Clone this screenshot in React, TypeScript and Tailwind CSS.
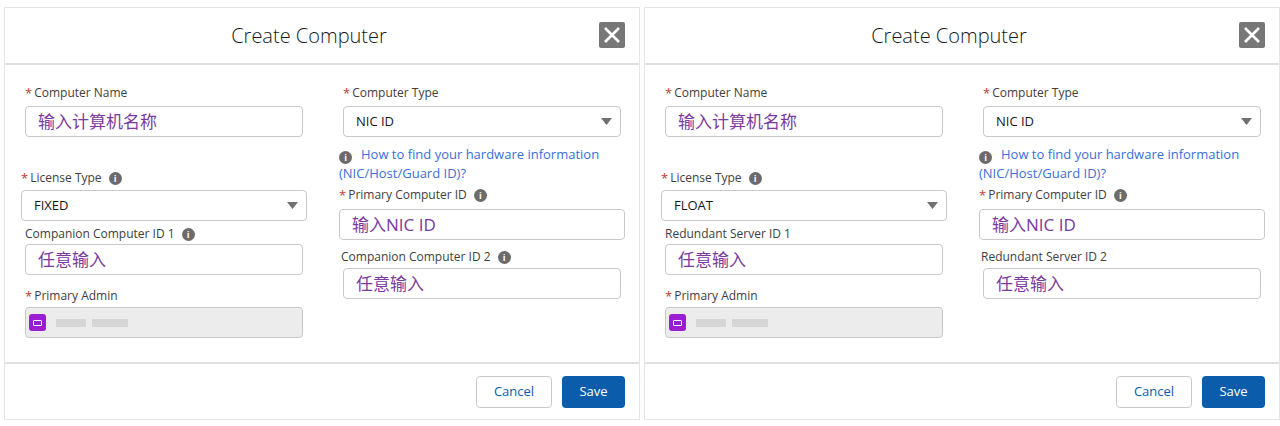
import React from "react";

const F = { fontFamily: '"Open Sans","Noto Sans CJK SC",sans-serif' };

function Info() {
  return (
    <span className="inline-flex w-[13px] h-[13px] rounded-full bg-[#6b6b6b] text-white text-[9px] font-bold items-center justify-center ml-[7px] leading-none">i</span>
  );
}
function Label({ text, req, info, cls = "" }: { text: string; req?: boolean; info?: boolean; cls?: string }) {
  return (
    <div className={"flex items-center text-[12px] text-[#3e3e3c] h-[16px] " + cls}>
      {req && <span className="text-[#c23934] mr-[2px] text-[13px] leading-none">*</span>}
      <span>{text}</span>
      {info && <Info />}
    </div>
  );
}
function Input({ text, cls = "" }: { text: string; cls?: string }) {
  return (
    <div className={"h-[31px] border border-[#c9c9c9] rounded-[4px] bg-white flex items-center px-[12px] text-[17px] text-[#7a3a9e] " + cls}>
      {text}
    </div>
  );
}
function Select({ text, cls = "" }: { text: string; cls?: string }) {
  return (
    <div className={"h-[31px] border border-[#c9c9c9] rounded-[4px] bg-white flex items-center justify-between pl-[12px] pr-[8px] text-[13px] text-[#181818] " + cls}>
      <span>{text}</span>
      <svg width="11" height="7" viewBox="0 0 11 7"><path d="M0 0h11L5.5 7z" fill="#707070" /></svg>
    </div>
  );
}

function Panel({ lic, id1, id2, info12 }: { lic: string; id1: string; id2: string; info12: boolean }) {
  return (
    <div className="w-[636px] h-[413px] border border-[#e5e5e5] bg-white flex flex-col">
      <div className="h-[57px] border-b-2 border-[#e0e0e0] flex items-center justify-center relative pr-[26px]">
        <span className="text-[20px] text-[#181818] font-light">Create Computer</span>
        <div className="absolute right-[14px] top-[14px] w-[26px] h-[26px] bg-[#777] rounded-[2px] flex items-center justify-center">
          <svg width="18" height="18" viewBox="0 0 18 18"><path d="M2 2L16 16M16 2L2 16" stroke="white" strokeWidth="2.6" /></svg>
        </div>
      </div>
      <div className="flex-1 flex pt-[20px]">
        <div className="w-[320px] pl-[16px] flex flex-col">
          <Label text="Computer Name" req cls="ml-[4px]" />
          <Input text="输入计算机名称" cls="mt-[5px] ml-[4px] w-[278px]" />
          <Label text="License Type" req info cls="mt-[33px]" />
          <Select text={lic} cls="mt-[4px] w-[286px]" />
          <Label text={id1} info={info12} cls="mt-[5px] ml-[4px]" />
          <Input text="任意输入" cls="mt-[2px] ml-[4px] w-[278px]" />
          <Label text="Primary Admin" req cls="mt-[13px] ml-[4px]" />
          <div className="mt-[3px] ml-[4px] w-[278px] h-[31px] border border-[#c9c9c9] rounded-[4px] bg-[#ececec] flex items-center px-[3px]">
            <div className="w-[17px] h-[17px] rounded-[3px] bg-[#9a1ed0] flex items-center justify-center">
              <div className="w-[9px] h-[6px] border border-white rounded-[1px]" />
            </div>
            <div className="ml-[10px] w-[30px] h-[8px] bg-[#d6d6d6]" />
            <div className="ml-[6px] w-[36px] h-[8px] bg-[#d6d6d6]" />
          </div>
        </div>
        <div className="flex-1 pl-[14px] flex flex-col">
          <Label text="Computer Type" req cls="ml-[4px]" />
          <Select text="NIC ID" cls="mt-[5px] ml-[4px] w-[278px]" />
          <div className="mt-[8px] text-[13px] leading-[19px] text-[#3a6fd8] w-[290px]">
            <span className="inline-block w-[13px] h-[13px] rounded-full bg-[#6b6b6b] text-white text-[9px] font-bold text-center leading-[13px] mr-[9px] align-[-2px]">i</span>
            How to find your hardware information (NIC/Host/Guard ID)?
          </div>
          <Label text="Primary Computer ID" req info cls="mt-[4px]" />
          <Input text="输入NIC ID" cls="mt-[6px] w-[286px]" />
          <Label text={id2} info={info12} cls="mt-[9px] ml-[2px]" />
          <Input text="任意输入" cls="mt-[3px] ml-[4px] w-[278px]" />
        </div>
      </div>
      <div className="h-[57px] border-t-2 border-[#e0e0e0] flex items-center justify-end gap-[10px] pr-[14px]">
        <div className="w-[76px] h-[32px] border border-[#c9c9c9] rounded-[4px] flex items-center justify-center text-[13px] text-[#0b5cab]">Cancel</div>
        <div className="w-[63px] h-[32px] rounded-[4px] bg-[#0b5cab] flex items-center justify-center text-[13px] text-white">Save</div>
      </div>
    </div>
  );
}

export default function App() {
  return (
    <div className="w-[1280px] h-[426px] bg-white flex gap-[4px] pl-[4px] pt-[7px]" style={F}>
      <Panel lic="FIXED" id1="Companion Computer ID 1" id2="Companion Computer ID 2" info12 />
      <Panel lic="FLOAT" id1="Redundant Server ID 1" id2="Redundant Server ID 2" info12={false} />
    </div>
  );
}
